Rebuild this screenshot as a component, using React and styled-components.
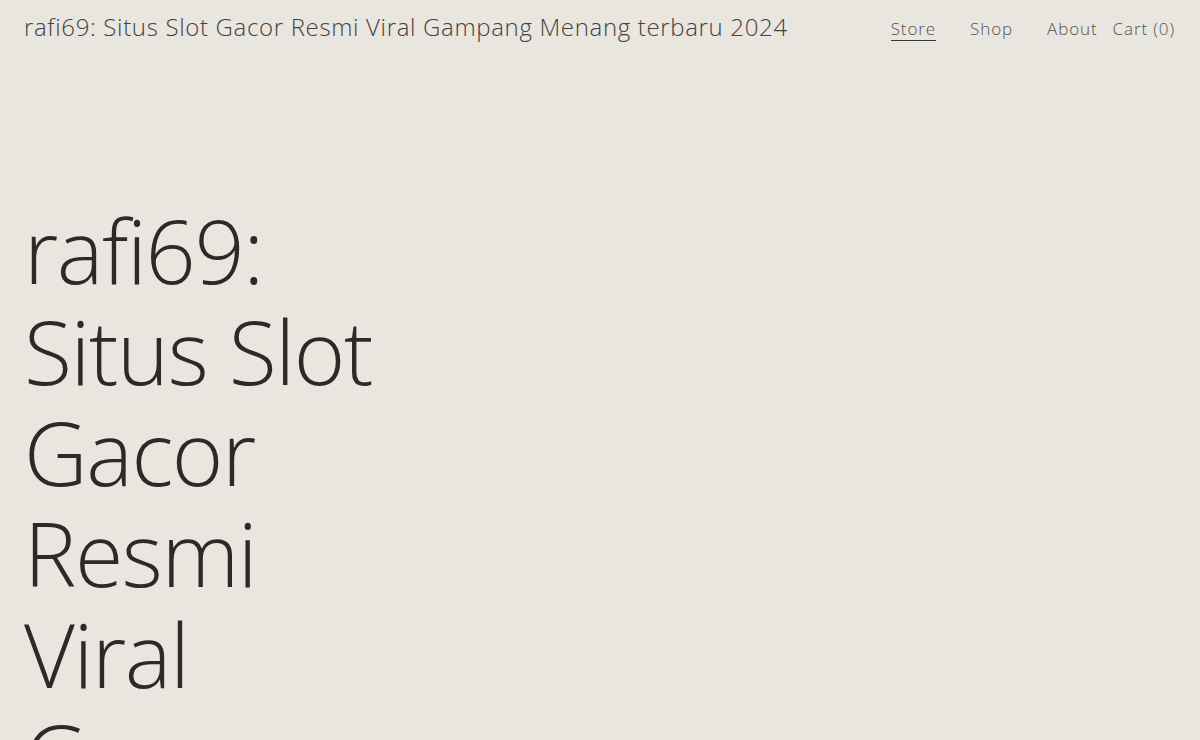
import React from "react";
import styled, { createGlobalStyle } from "styled-components";

const Global = createGlobalStyle`
  html, body { margin: 0; padding: 0; background: #e9e5df; }
  body { font-family: "Open Sans", "Segoe UI", sans-serif; font-weight: 300; color: #2c2b28; overflow: hidden; }
  a { color: inherit; text-decoration: none; }
`;

const Page = styled.div`
  height: 740px;
  overflow: hidden;
  background: #e9e5df;
`;

const Header = styled.header`
  display: flex;
  align-items: center;
  justify-content: space-between;
  padding: 4px 25px 0 24px;
  height: 45px;
`;

const Title = styled.a`
  font-size: 24px;
  letter-spacing: 0.66px;
  color: #45423e;
  white-space: nowrap;
`;

const Nav = styled.nav`
  display: flex;
  align-items: center;
  gap: 15px;
  margin-top: 4px;
`;

const NavGroup = styled.div`
  display: flex;
  align-items: center;
  gap: 34px;
`;

const NavLink = styled.a`
  font-size: 17px;
  color: #57534e;
  letter-spacing: 0.9px;
  padding-bottom: 0;
  border-bottom: 1px solid ${p => (p.$active ? "#3a3834" : "transparent")};
`;

const Hero = styled.main`
  padding: 151px 24px 0 24px;
`;

const Heading = styled.h1`
  margin: 0;
  font-weight: 300;
  font-size: 88px;
  line-height: 101px;
  letter-spacing: -1.4px;
  color: #2b2a26;
  max-width: 385px;
`;

export default function App() {
  return (
    <Page>
      <Global />
      <Header>
        <Title href="#">rafi69: Situs Slot Gacor Resmi Viral Gampang Menang terbaru 2024</Title>
        <Nav>
          <NavGroup>
            <NavLink href="#" $active>Store</NavLink>
            <NavLink href="#">Shop</NavLink>
            <NavLink href="#">About</NavLink>
          </NavGroup>
          <NavLink href="#">Cart (0)</NavLink>
        </Nav>
      </Header>
      <Hero>
        <Heading>rafi69: Situs Slot Gacor Resmi Viral Gampang Menang terbaru 2024</Heading>
      </Hero>
    </Page>
  );
}
